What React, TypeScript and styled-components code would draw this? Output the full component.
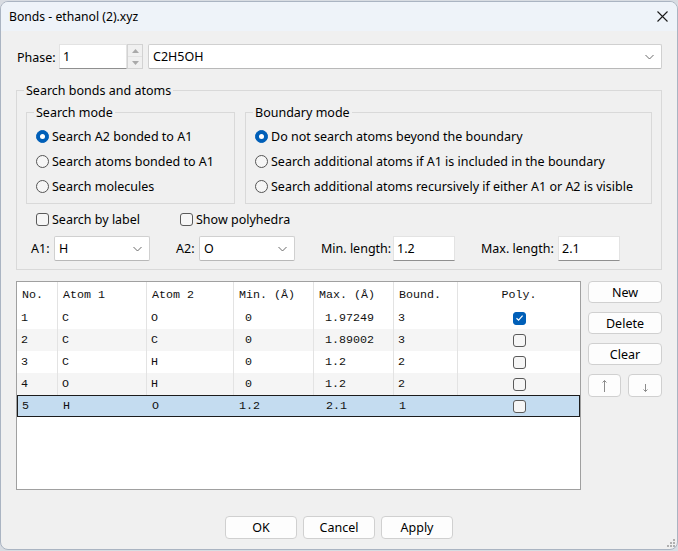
import React from "react";
import styled, { createGlobalStyle } from "styled-components";

const UI = `"Noto Sans", "Open Sans", Arial, sans-serif`;
const MONO = `"Liberation Mono", "Courier New", monospace`;

const GlobalStyle = createGlobalStyle`
  html, body { margin: 0; padding: 0; background: #d8dce2; }
  body { font-family: ${UI}; font-size: 12.5px; color: #000; }
  * { box-sizing: border-box; }
`;

const Window = styled.div`
  position: relative;
  width: 678px;
  height: 549px;
  margin-top: 1px;
  border: 1px solid #aab4c2;
  border-radius: 8px;
  overflow: hidden;
  background: #f0f0f0;
  display: flex;
  flex-direction: column;
`;

const TitleBar = styled.div`
  height: 29px;
  flex: none;
  background: #eef3f9;
  display: flex;
  align-items: center;
  justify-content: space-between;
  padding: 0 9px 0 8px;
`;

const Title = styled.span`
  font-size: 12.2px;
  color: #000;
`;

const CloseBtn = styled.span`
  display: flex;
  width: 12px;
  height: 12px;
  align-items: center;
  justify-content: center;
`;

const Body = styled.div`
  flex: 1;
  display: flex;
  flex-direction: column;
  padding: 13px 15px 0 15px;
`;

const PhaseRow = styled.div`
  display: flex;
  align-items: center;
  height: 25px;
`;

const Label = styled.span<{ $w?: number; $ml?: number }>`
  flex: none;
  white-space: nowrap;
  ${(p) => (p.$w ? `width: ${p.$w}px;` : "")}
  ${(p) => (p.$ml ? `margin-left: ${p.$ml}px;` : "")}
`;

const PhaseLabel = styled(Label)`
  padding-left: 1px;
  padding-top: 1px;
`;

const SpinBox = styled.div`
  display: flex;
  width: 84px;
  height: 25px;
  flex: none;
`;

const TextBox = styled.div<{ $w?: number }>`
  display: flex;
  align-items: center;
  height: 25px;
  ${(p) => (p.$w ? `width: ${p.$w}px; flex: none;` : "flex: 1;")}
  background: #fff;
  border: 1px solid #e3e3e3;
  border-bottom-color: #8f8f8f;
  padding-left: 3px;
`;

const SpinButtons = styled.div`
  width: 16px;
  flex: none;
  display: flex;
  flex-direction: column;
  border: 1px solid #d2d2d2;
  background: #f0f0f0;
`;

const SpinHalf = styled.div`
  flex: 1;
  display: flex;
  align-items: center;
  justify-content: center;
  & + & { border-top: 1px solid #e2e2e2; }
`;

const Combo = styled.div<{ $w?: number; $ml?: number }>`
  display: flex;
  align-items: center;
  justify-content: space-between;
  height: 25px;
  ${(p) => (p.$w ? `width: ${p.$w}px; flex: none;` : "flex: 1;")}
  ${(p) => (p.$ml ? `margin-left: ${p.$ml}px;` : "")}
  background: #fff;
  border: 1px solid #d0d0d0;
  border-bottom-color: #b8b8b8;
  border-radius: 2px;
  padding: 0 7px 0 4px;
`;

const OuterGroup = styled.div`
  margin-top: 21px;
  border: 1px solid #d9d9d9;
  display: flex;
  flex-direction: column;
  padding: 0 9px 8px 9px;
`;

const Legend = styled.span<{ $ml: number }>`
  align-self: flex-start;
  margin-top: -9px;
  margin-left: ${(p) => p.$ml}px;
  line-height: 18px;
  height: 16px;
  padding: 0 2px;
  background: #f0f0f0;
  white-space: nowrap;
`;

const ModeRow = styled.div`
  display: flex;
  gap: 10px;
  margin-top: 14px;
`;

const InnerGroup = styled.div<{ $w?: number }>`
  ${(p) => (p.$w ? `width: ${p.$w}px; flex: none;` : "flex: 1;")}
  border: 1px solid #d9d9d9;
  display: flex;
  flex-direction: column;
  padding: 0 0 4px 9px;
`;

const OptionList = styled.div`
  margin-top: 4px;
  display: flex;
  flex-direction: column;
`;

const Option = styled.label<{ $w?: number }>`
  display: flex;
  align-items: center;
  height: 25px;
  gap: 3px;
  white-space: nowrap;
  ${(p) => (p.$w ? `width: ${p.$w}px; flex: none;` : "")}
`;

const RadioDot = styled.span<{ $on?: boolean }>`
  flex: none;
  width: 13px;
  height: 13px;
  border-radius: 50%;
  border: 1px solid ${(p) => (p.$on ? "#005fb8" : "#555")};
  background: ${(p) => (p.$on ? "#005fb8" : "#f6f6f6")};
  display: flex;
  align-items: center;
  justify-content: center;
  &::after {
    content: "";
    display: ${(p) => (p.$on ? "block" : "none")};
    width: 5px;
    height: 5px;
    border-radius: 50%;
    background: #fff;
  }
`;

const Box = styled.span<{ $on?: boolean }>`
  flex: none;
  width: 13px;
  height: 13px;
  border-radius: 3px;
  border: 1px solid ${(p) => (p.$on ? "#005fb8" : "#5a5a5a")};
  background: ${(p) => (p.$on ? "#005fb8" : "#f6f6f6")};
  display: flex;
  align-items: center;
  justify-content: center;
`;

const CheckRow = styled.div`
  display: flex;
  align-items: center;
  height: 20px;
  margin-top: 5px;
  padding-left: 10px;
`;

const FieldRow = styled.div`
  display: flex;
  align-items: center;
  height: 25px;
  margin-top: 7px;
  padding-left: 5px;
`;

const ListSection = styled.div`
  display: flex;
  margin-top: 11px;
  height: 209px;
  gap: 7px;
`;

const Table = styled.div`
  flex: 1;
  background: #fff;
  border: 1px solid #a0a0a0;
  display: flex;
  flex-direction: column;
  font-family: ${MONO};
  font-size: 11.67px;
  color: #111;
`;

const COLS = "41px 89px 87px 80px 80px 64px 1fr";

const HeaderRow = styled.div`
  display: grid;
  grid-template-columns: ${COLS};
  height: 25px;
  flex: none;
`;

const HeadCell = styled.div<{ $center?: boolean }>`
  display: flex;
  align-items: center;
  justify-content: ${(p) => (p.$center ? "center" : "flex-start")};
  padding-left: ${(p) => (p.$center ? 0 : 5)}px;
  border-right: 1px solid #e3e3e3;
  white-space: pre;
  &:last-child { border-right: none; }
`;

const DataRow = styled.div<{ $alt?: boolean; $sel?: boolean }>`
  display: grid;
  grid-template-columns: ${COLS};
  height: 22px;
  flex: none;
  background: ${(p) => (p.$sel ? "#c4dcf0" : p.$alt ? "#f5f5f5" : "#fff")};
  ${(p) => (p.$sel ? "border: 1px solid #1c1c1c;" : "")}
`;

const Cell = styled.div<{ $center?: boolean; $sel?: boolean }>`
  display: flex;
  align-items: center;
  justify-content: ${(p) => (p.$center ? "center" : "flex-start")};
  padding-left: ${(p) => (p.$center ? 0 : 4)}px;
  border-right: 1px solid ${(p) => (p.$sel ? "transparent" : "#e3e3e3")};
  white-space: pre;
  &:last-child { border-right: none; }
`;

const SideButtons = styled.div`
  width: 74px;
  flex: none;
  display: flex;
  flex-direction: column;
  gap: 9px;
`;

const ArrowRow = styled.div`
  display: flex;
  gap: 7px;
`;

const Button = styled.button<{ $w?: number; $dim?: boolean }>`
  ${(p) => (p.$w ? `width: ${p.$w}px;` : "width: 100%;")}
  height: ${(p) => (p.$dim ? 23 : 22)}px;
  flex: ${(p) => (p.$w ? "none" : "initial")};
  background: #fdfdfd;
  border: 1px solid #d0d0d0;
  border-radius: 4px;
  font-family: ${UI};
  font-size: 12.5px;
  color: #000;
  padding: 0;
  display: flex;
  align-items: center;
  justify-content: center;
`;

const Footer = styled.div`
  display: flex;
  justify-content: center;
  gap: 6px;
  margin-top: 26px;
`;

const FooterButton = styled(Button)`
  width: 72px;
  height: 23px;
`;

const Grip = styled.svg`
  position: absolute;
  right: 1px;
  bottom: 1px;
`;

const Chevron = () => (
  <svg width="9" height="6" viewBox="0 0 9 6">
    <path d="M0.5 1 L4.5 5 L8.5 1" fill="none" stroke="#6b6b6b" strokeWidth="1" />
  </svg>
);

const Check = () => (
  <svg width="9" height="8" viewBox="0 0 9 8">
    <path d="M1.5 4.2 L3.6 6.2 L7.6 1.6" fill="none" stroke="#fff" strokeWidth="1.2" />
  </svg>
);

const Tri = ({ up }: { up?: boolean }) => (
  <svg width="7" height="4" viewBox="0 0 7 4">
    <path d={up ? "M0 4 L3.5 0 L7 4 Z" : "M0 0 L3.5 4 L7 0 Z"} fill="#a9a9a9" />
  </svg>
);

const Arrow = ({ down }: { down?: boolean }) => (
  <svg width="7" height="14" viewBox="0 0 7 14">
    {down ? (
      <path d="M3.5 5 V12.5 M1.5 10.5 L3.5 12.5 L5.5 10.5" fill="none" stroke="#8c8c8c" strokeWidth="1" />
    ) : (
      <path d="M3.5 1.5 V13 M1.5 3.5 L3.5 1.5 L5.5 3.5" fill="none" stroke="#8c8c8c" strokeWidth="1" />
    )}
  </svg>
);

const rows = [
  { no: "1", a1: "C", a2: "O", min: " 0", max: " 1.97249", b: "3", poly: true },
  { no: "2", a1: "C", a2: "C", min: " 0", max: " 1.89002", b: "3", poly: false },
  { no: "3", a1: "C", a2: "H", min: " 0", max: " 1.2", b: "2", poly: false },
  { no: "4", a1: "O", a2: "H", min: " 0", max: " 1.2", b: "2", poly: false },
  { no: "5", a1: "H", a2: "O", min: "1.2", max: " 2.1", b: "1", poly: false },
];

export default function App() {
  return (
    <>
      <GlobalStyle />
      <Window>
        <TitleBar>
          <Title>Bonds - ethanol (2).xyz</Title>
          <CloseBtn>
            <svg width="11" height="11" viewBox="0 0 11 11">
              <path d="M0.5 0.5 L10.5 10.5 M10.5 0.5 L0.5 10.5" stroke="#1a1a1a" strokeWidth="1.1" />
            </svg>
          </CloseBtn>
        </TitleBar>
        <Body>
          <PhaseRow>
            <PhaseLabel $w={43}>Phase:</PhaseLabel>
            <SpinBox>
              <TextBox>1</TextBox>
              <SpinButtons>
                <SpinHalf><Tri up /></SpinHalf>
                <SpinHalf><Tri /></SpinHalf>
              </SpinButtons>
            </SpinBox>
            <Combo $ml={5}>
              <span>C2H5OH</span>
              <Chevron />
            </Combo>
          </PhaseRow>

          <OuterGroup>
            <Legend $ml={-2}>Search bonds and atoms</Legend>
            <ModeRow>
              <InnerGroup $w={209}>
                <Legend $ml={-2}>Search mode</Legend>
                <OptionList>
                  <Option><RadioDot $on />Search A2 bonded to A1</Option>
                  <Option><RadioDot />Search atoms bonded to A1</Option>
                  <Option><RadioDot />Search molecules</Option>
                </OptionList>
              </InnerGroup>
              <InnerGroup>
                <Legend $ml={-2}>Boundary mode</Legend>
                <OptionList>
                  <Option><RadioDot $on />Do not search atoms beyond the boundary</Option>
                  <Option><RadioDot />Search additional atoms if A1 is included in the boundary</Option>
                  <Option><RadioDot />Search additional atoms recursively if either A1 or A2 is visible</Option>
                </OptionList>
              </InnerGroup>
            </ModeRow>
            <CheckRow>
              <Option $w={144}><Box />Search by label</Option>
              <Option><Box />Show polyhedra</Option>
            </CheckRow>
            <FieldRow>
              <Label $w={23}>A1:</Label>
              <Combo $w={96}><span>H</span><Chevron /></Combo>
              <Label $w={23} $ml={26}>A2:</Label>
              <Combo $w={96}><span>O</span><Chevron /></Combo>
              <Label $w={72} $ml={26}>Min. length:</Label>
              <TextBox $w={62}>1.2</TextBox>
              <Label $w={77} $ml={26}>Max. length:</Label>
              <TextBox $w={62}>2.1</TextBox>
            </FieldRow>
          </OuterGroup>

          <ListSection>
            <Table>
              <HeaderRow>
                <HeadCell>No.</HeadCell>
                <HeadCell>Atom 1</HeadCell>
                <HeadCell>Atom 2</HeadCell>
                <HeadCell>Min. (Å)</HeadCell>
                <HeadCell>Max. (Å)</HeadCell>
                <HeadCell>Bound.</HeadCell>
                <HeadCell $center>Poly.</HeadCell>
              </HeaderRow>
              {rows.map((r, i) => {
                const sel = i === 4;
                return (
                  <DataRow key={r.no} $alt={i % 2 === 1} $sel={sel}>
                    <Cell $sel={sel}>{r.no}</Cell>
                    <Cell $sel={sel}>{r.a1}</Cell>
                    <Cell $sel={sel}>{r.a2}</Cell>
                    <Cell $sel={sel}>{r.min}</Cell>
                    <Cell $sel={sel}>{r.max}</Cell>
                    <Cell $sel={sel}>{r.b}</Cell>
                    <Cell $sel={sel} $center>
                      <Box $on={r.poly}>{r.poly && <Check />}</Box>
                    </Cell>
                  </DataRow>
                );
              })}
            </Table>
            <SideButtons>
              <Button>New</Button>
              <Button>Delete</Button>
              <Button>Clear</Button>
              <ArrowRow>
                <Button $w={33} $dim aria-label="Move up"><Arrow /></Button>
                <Button $w={34} $dim aria-label="Move down"><Arrow down /></Button>
              </ArrowRow>
            </SideButtons>
          </ListSection>

          <Footer>
            <FooterButton>OK</FooterButton>
            <FooterButton>Cancel</FooterButton>
            <FooterButton>Apply</FooterButton>
          </Footer>
        </Body>
        <Grip width="10" height="10" viewBox="0 0 10 10">
          <rect x="7" y="1" width="2" height="2" fill="#b0b0b0" />
          <rect x="4" y="4" width="2" height="2" fill="#b0b0b0" />
          <rect x="7" y="4" width="2" height="2" fill="#b0b0b0" />
          <rect x="1" y="7" width="2" height="2" fill="#b0b0b0" />
          <rect x="4" y="7" width="2" height="2" fill="#b0b0b0" />
          <rect x="7" y="7" width="2" height="2" fill="#b0b0b0" />
        </Grip>
      </Window>
    </>
  );
}
